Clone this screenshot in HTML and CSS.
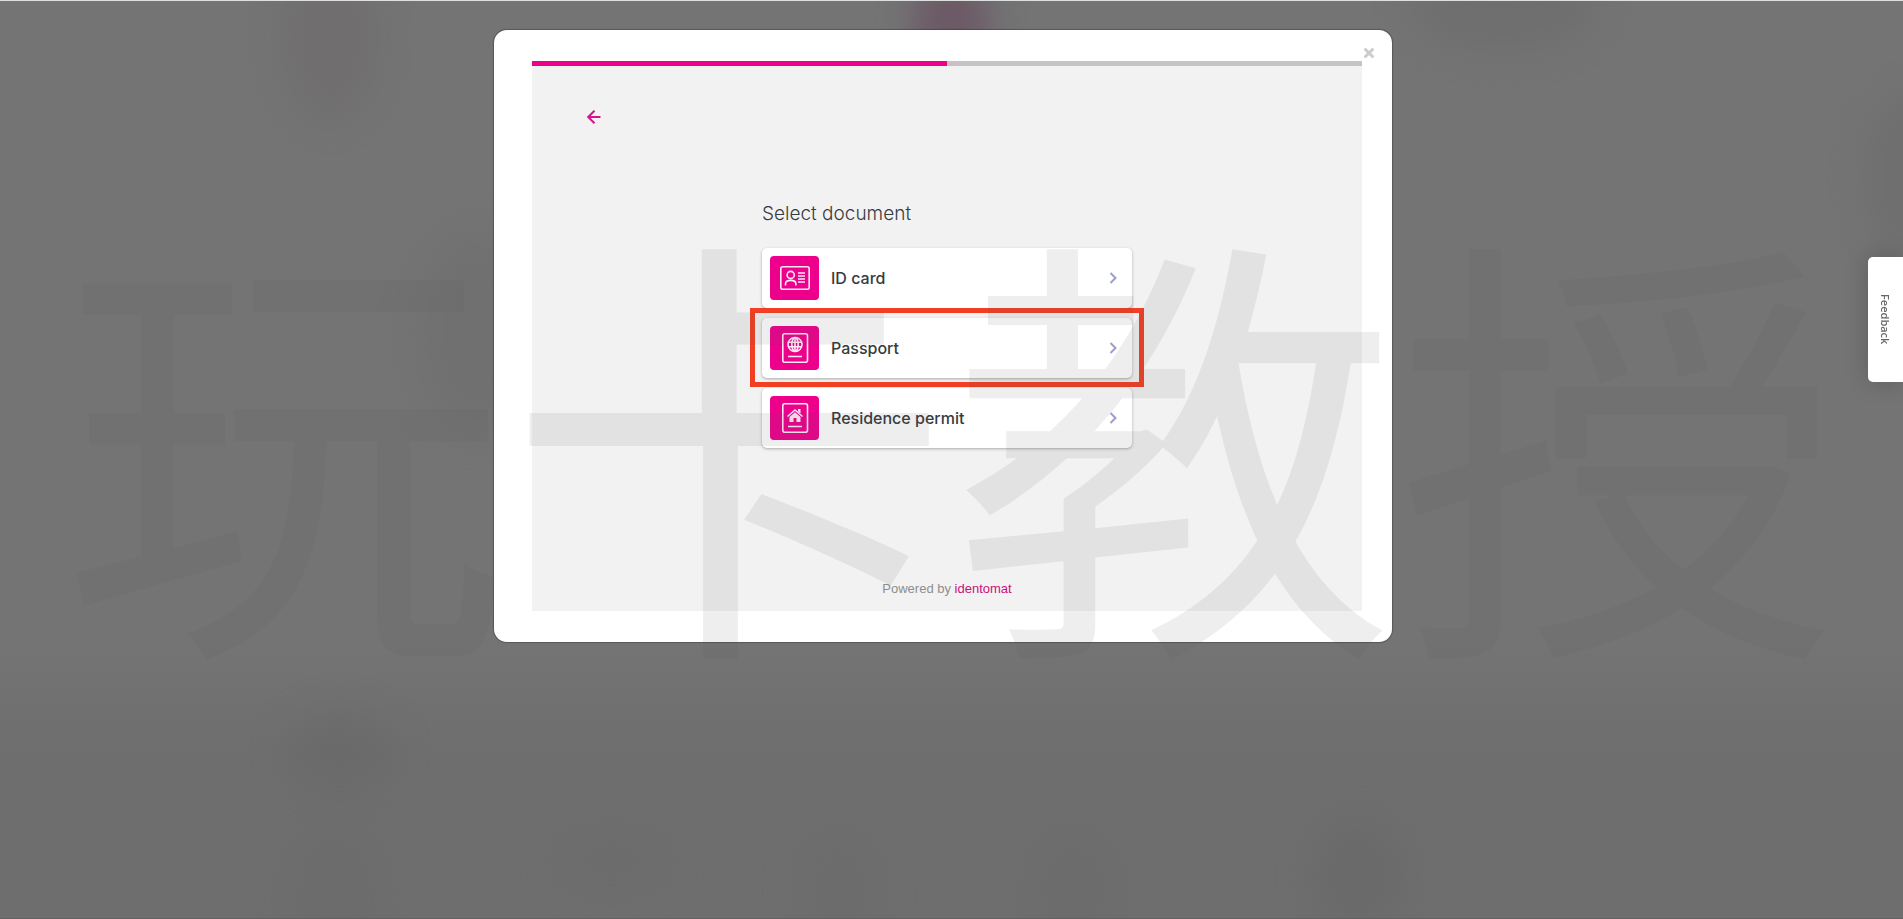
FILE: index.html
```html
<!DOCTYPE html>
<html lang="en">
<head>
    <meta charset="UTF-8">
    <meta name="viewport" content="width=device-width, initial-scale=1.0">
    <title>Select document</title>
    <link rel="stylesheet" href="styles.css">
</head>

<body>
    <div class="backdrop">
        <div class="blob blob-pink"></div>
        <div class="blob blob-top-left"></div>
        <div class="blob blob-top-right"></div>
        <div class="blob blob-left"></div>
        <div class="blob blob-side"></div>
        <div class="blob blob-bottom-left"></div>
        <div class="blob blob-bottom-corner"></div>
        <div class="blob blob-bottom-mid"></div>
        <div class="blob blob-bottom-center"></div>
        <div class="blob blob-bottom-next"></div>
        <div class="blob blob-bottom-right"></div>
    </div>

    <main class="modal">
        <button class="close" aria-label="Close">
            <svg width="12" height="12" viewBox="0 0 12 12"><path d="M2.5 2.5l7 7M9.5 2.5l-7 7"/></svg>
        </button>

        <section class="panel">
            <div class="progress"><div class="progress-bar"></div></div>

            <button class="back" aria-label="Back">
                <svg width="16" height="16" viewBox="0 0 16 16"><path d="M14.500 8H2.500M8.500 1.700L2.200 8l6.300 6.300"/></svg>
            </button>

            <div class="documents">
                <h1>Select document</h1>

                <button class="document">
                    <span class="icon">
                        <svg width="30" height="30" viewBox="0 0 30 30">
                            <rect x="0.8" y="3.8" width="28.4" height="22.4" rx="2"/>
                            <circle cx="10.700" cy="12" r="3.600"/>
                            <path d="M5.500 22.500v-1.500c0-2.300 2-3.600 5.200-3.600s5.200 1.300 5.200 3.600v1.500M18 10h7M18 13h7M18 16h7M18 19h7"/>
                        </svg>
                    </span>
                    <span class="name">ID card</span>
                    <svg class="chevron" width="8" height="12" viewBox="0 0 8 12"><path d="M1.500 1l5 5-5 5"/></svg>
                </button>

                <button class="document selected">
                    <span class="icon">
                        <svg width="30" height="30" viewBox="0 0 30 30">
                            <rect x="2.800" y="0.800" width="24.700" height="28.400" rx="2"/>
                            <circle cx="15" cy="11.500" r="7"/>
                            <ellipse cx="15" cy="11.500" rx="3.200" ry="7"/>
                            <path d="M15 4.500v14M8.500 9.300h13M8.500 13.700h13M8 23.500h14"/>
                        </svg>
                    </span>
                    <span class="name">Passport</span>
                    <svg class="chevron" width="8" height="12" viewBox="0 0 8 12"><path d="M1.500 1l5 5-5 5"/></svg>
                </button>

                <button class="document">
                    <span class="icon">
                        <svg width="30" height="30" viewBox="0 0 30 30">
                            <rect x="2.800" y="0.800" width="24.700" height="28.400" rx="2"/>
                            <path d="M7.500 13.500l7.500-6.500 7.500 6.500M8 23.500h14"/>
                            <path class="solid" d="M15 9.300l5.500 4.800V19h-4v-4h-3v4h-4v-4.900zM18 6h2.500v4.500L18 8.300z"/>
                        </svg>
                    </span>
                    <span class="name">Residence permit</span>
                    <svg class="chevron" width="8" height="12" viewBox="0 0 8 12"><path d="M1.500 1l5 5-5 5"/></svg>
                </button>
            </div>

            <p class="powered">Powered by <a href="#">identomat</a></p>
        </section>
    </main>

    <button class="feedback">Feedback</button>

    <div class="watermark">玩卡教授</div>
</body>
</html>
```

FILE: styles.css
```css
* {
    box-sizing: border-box;
}

body {
    font-family: Inter, "Liberation Sans", Arial, sans-serif;
    background-color: #747474;
    color: #363b40;
    margin: 0;
    min-height: 100vh;
    padding: 30px 17px 30px 0;
    overflow: hidden;
}

button {
    font-family: inherit;
    color: inherit;
    border: none;
    padding: 0;
    background: none;
    cursor: pointer;
}

svg {
    fill: none;
    stroke: currentColor;
    display: block;
}

/* Blurred page behind the modal */
.backdrop {
    position: fixed;
    inset: 0;
    z-index: -1;
    overflow: hidden;
    border-top: 1px solid #dde0df;
    border-bottom: 1px solid #626262;
    background: linear-gradient(#747474 70%, #6e6e6e 82%);
}

.blob {
    position: absolute;
    background-color: #6b6b6b;
    border-radius: 50%;
    filter: blur(20px);
    opacity: 0.6;
}

.blob-pink {
    left: 48%;
    top: -30px;
    width: 76px;
    height: 100px;
    background-color: #6c5a66;
    filter: blur(16px);
    opacity: 1;
}

.blob-top-left { left: 15%; top: -50px; width: 90px; height: 170px; background-color: #6e6a6b; }
.blob-top-right { left: 74%; top: -40px; width: 190px; height: 90px; }
.blob-left { left: 22%; top: 230px; width: 110px; height: 200px; opacity: 0.4; }
.blob-side { left: 98%; top: 90px; width: 110px; height: 170px; }
.blob-bottom-left { left: 15%; top: 710px; width: 110px; height: 80px; background-color: #686868; }
.blob-bottom-corner { left: 15%; top: 820px; width: 100px; height: 160px; }
.blob-bottom-mid { left: 29%; top: 830px; width: 120px; height: 60px; }
.blob-bottom-center { left: 42%; top: 830px; width: 80px; height: 120px; }
.blob-bottom-next { left: 54%; top: 830px; width: 90px; height: 120px; }
.blob-bottom-right { left: 69%; top: 820px; width: 90px; height: 110px; background-color: #676767; }

/* Modal */
.modal {
    position: relative;
    max-width: 898px;
    margin: 0 auto;
    padding: 31px 30px 31px 38px;
    background-color: #ffffff;
    border-radius: 13px;
    box-shadow: 0 0 1px 1px rgba(0, 0, 0, 0.25);
}

.close {
    position: absolute;
    top: 17px;
    right: 17px;
    color: #cccccc;
    stroke-width: 3;
    stroke-linecap: round;
}

.panel {
    display: flex;
    flex-direction: column;
    min-height: 550px;
    background-color: #f2f2f2;
}

.progress {
    height: 5px;
    background-color: #c4c4c4;
}

.progress-bar {
    width: 50%;
    height: 100%;
    background-color: #ec008c;
}

.back {
    align-self: flex-start;
    margin: 43px 0 0 54px;
    color: #d8128a;
    stroke-width: 2;
}

/* Document list */
.documents {
    display: flex;
    flex-direction: column;
    gap: 10px;
    width: 370px;
    max-width: 100%;
    margin: 77px auto 0;
}

h1 {
    margin: 0 0 12px;
    font-size: 19px;
    line-height: 24px;
    font-weight: 300;
}

.document {
    position: relative;
    display: flex;
    align-items: center;
    gap: 12px;
    height: 60px;
    padding: 0 15px 0 8px;
    background-color: #ffffff;
    border-radius: 5px;
    box-shadow: 0 1px 3px rgba(0, 0, 0, 0.3);
}

/* Frame round the chosen document */
.selected::after {
    content: "";
    position: absolute;
    inset: -10px -12px -9px;
    border: 5px solid #f23f24;
}

.icon {
    display: flex;
    align-items: center;
    justify-content: center;
    width: 49px;
    height: 44px;
    border-radius: 4px;
    background-color: #ec008c;
    color: #ffe9f6;
    stroke-width: 1.6;
}

.solid {
    fill: currentColor;
    stroke: none;
}

.name {
    flex: 1;
    text-align: left;
    font-size: 16px;
    font-weight: 500;
}

.chevron {
    color: #9c9dcc;
    stroke-width: 2;
}

.powered {
    margin: auto 0 14px;
    text-align: center;
    font-family: "Liberation Sans", Arial, sans-serif;
    font-size: 13px;
    line-height: 16px;
    color: #8e8e8e;
}

.powered a {
    color: #cc0f80;
    text-decoration: none;
}

.feedback {
    position: fixed;
    top: 257px;
    right: 0;
    width: 35px;
    height: 125px;
    writing-mode: vertical-rl;
    font-family: "Open Sans", sans-serif;
    font-size: 11px;
    font-weight: 600;
    color: #666666;
    background-color: #ffffff;
    border-radius: 5px 0 0 5px;
    box-shadow: 0 0 24px rgba(0, 0, 0, 0.2);
}

.watermark {
    position: fixed;
    inset: 0;
    display: flex;
    align-items: center;
    justify-content: center;
    padding-bottom: 60px;
    font-family: "Noto Sans CJK SC", sans-serif;
    font-size: 445px;
    line-height: 1;
    white-space: nowrap;
    color: rgba(88, 88, 88, 0.1);
    pointer-events: none;
}
```
